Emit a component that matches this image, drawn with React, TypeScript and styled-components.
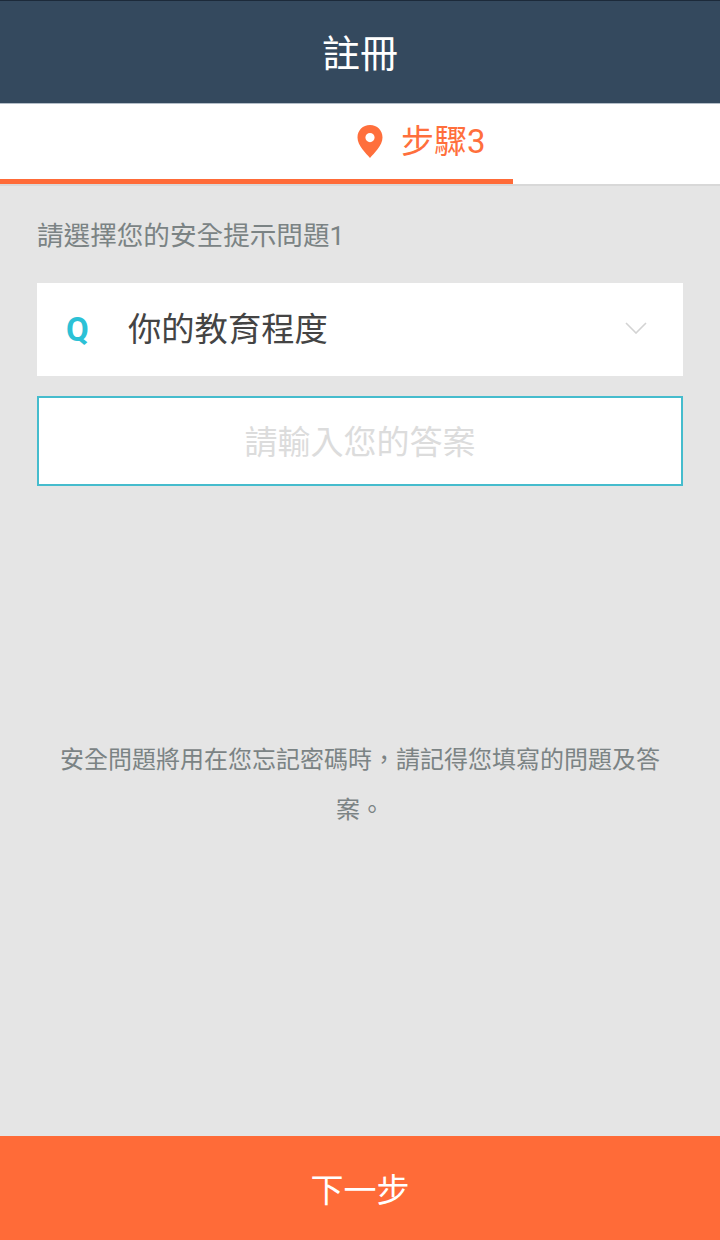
import * as React from 'react';
import styled, { createGlobalStyle } from 'styled-components';

const FONT = '"Roboto", "Noto Sans CJK TC", sans-serif';

const GlobalStyle = createGlobalStyle`
    html, body {
        margin: 0;
        padding: 0;
    }
    body {
        font-family: ${FONT};
    }
`;

const Page = styled.div`
    width: 720px;
    height: 1240px;
    display: flex;
    flex-direction: column;
    background-color: #e5e5e5;
    overflow: hidden;
`;

const Header = styled.header`
    height: 104px;
    flex: none;
    box-sizing: border-box;
    display: flex;
    align-items: center;
    justify-content: center;
    padding-bottom: 4px;
    background-color: #34495e;
    border-top: 1px solid #1c2a3a;
    border-bottom: 1px solid #b4bec8;
    color: #ffffff;
    font-size: 38px;
`;

const StepBar = styled.div`
    height: 80px;
    flex: none;
    background-color: #ffffff;
    border-bottom: 2px solid #d8d8d8;
    display: flex;
    flex-direction: column;
`;

const StepLabel = styled.div`
    flex: 1;
    display: flex;
    align-items: center;
    padding-left: 357px;
    gap: 18px;
    color: #ff6f3c;
    font-size: 33px;
`;

const StepText = styled.span`
    line-height: 36px;
    margin-top: 1px;
`;

const Progress = styled.div`
    width: 513px;
    height: 5px;
    background-color: #ff6b38;
`;

const Content = styled.main`
    flex: 1;
    display: flex;
    flex-direction: column;
    padding: 0 37px;
`;

const Prompt = styled.div`
    margin-top: 31px;
    height: 38px;
    line-height: 38px;
    font-size: 26.6px;
    color: #7b8384;
`;

const Select = styled.div`
    margin-top: 28px;
    height: 93px;
    display: flex;
    align-items: center;
    background-color: #ffffff;
    padding: 0 36px 0 29px;
`;

const QMark = styled.span`
    width: 62px;
    font-size: 33px;
    font-weight: 700;
    color: #2cc1d6;
`;

const SelectText = styled.span`
    flex: 1;
    font-size: 33.3px;
    line-height: 40px;
    color: #444444;
`;

const Chevron = styled.svg`
    margin-top: -3px;
`;

const AnswerInput = styled.input`
    margin-top: 20px;
    height: 90px;
    box-sizing: border-box;
    width: 100%;
    border: 2px solid #45bccd;
    background-color: #ffffff;
    outline: none;
    text-align: center;
    font-family: ${FONT};
    font-size: 33px;
    padding: 2px 0 0;
    &::placeholder {
        color: #dcdcdc;
        opacity: 1;
    }
`;

const Hint = styled.p`
    margin: 249px 13px 0;
    text-align: center;
    font-size: 24px;
    line-height: 50px;
    color: #7b8384;
`;

const NextButton = styled.button`
    height: 104px;
    flex: none;
    width: 100%;
    border: none;
    padding: 0;
    background-color: #ff6b38;
    color: #ffffff;
    font-family: ${FONT};
    font-size: 33px;
`;

const PinIcon = () => (
    <svg width="26" height="33" viewBox="0 0 26 33" aria-hidden="true">
        <path
            fill="#ff6f3c"
            fillRule="evenodd"
            d="M13 0C5.8 0 0.5 5.400 0.5 12.400 0.5 20.500 9 28 13 33c4-5 12.500-12.500 12.500-20.600C25.500 5.400 20.200 0 13 0zm0 8a4.600 4.600 0 1 1 0 9.200A4.600 4.600 0 0 1 13 8z"
        />
    </svg>
);

const ChevronIcon = () => (
    <Chevron width="22" height="12" viewBox="0 0 22 12" aria-hidden="true">
        <path d="M1 1l10 10L21 1" fill="none" stroke="#d3d3d3" strokeWidth="1.600" />
    </Chevron>
);

const App = () => (
    <Page>
        <GlobalStyle />
        <Header>註冊</Header>
        <StepBar>
            <StepLabel>
                <PinIcon />
                <StepText>步驟3</StepText>
            </StepLabel>
            <Progress />
        </StepBar>
        <Content>
            <Prompt>請選擇您的安全提示問題1</Prompt>
            <Select>
                <QMark>Q</QMark>
                <SelectText>你的教育程度</SelectText>
                <ChevronIcon />
            </Select>
            <AnswerInput placeholder="請輸入您的答案" />
            <Hint>安全問題將用在您忘記密碼時，請記得您填寫的問題及答案。</Hint>
        </Content>
        <NextButton>下一步</NextButton>
    </Page>
);

export default App;
